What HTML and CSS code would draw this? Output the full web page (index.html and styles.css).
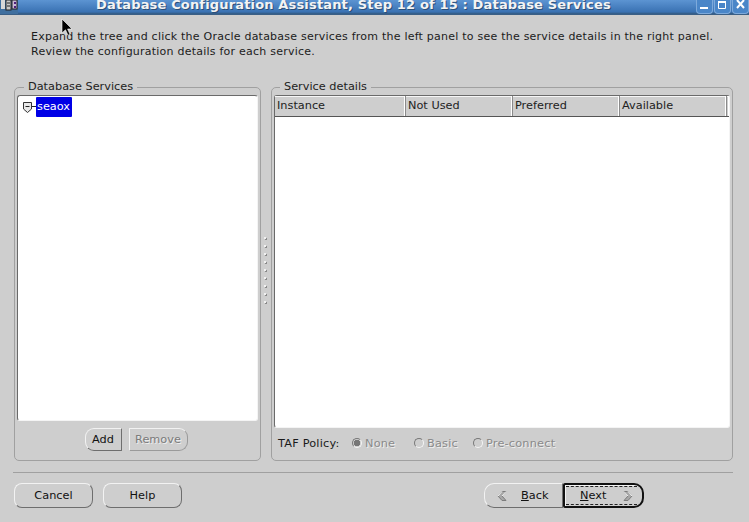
FILE: index.html
```html
<!DOCTYPE html>
<html lang="en">
<head>
<meta charset="utf-8">
<title>Database Configuration Assistant</title>
<link rel="stylesheet" href="styles.css">
</head>
<body>
<div class="window">
  <header class="titlebar">
    <svg class="app-icon" width="18" height="14" viewBox="0 0 18 14">
      <rect x="0" y="0" width="18" height="14" fill="#3f6f9f"/>
      <rect x="1" y="0" width="4" height="9" fill="#d8d8d8"/>
      <rect x="6" y="0" width="5" height="10" fill="#c9c9c9" stroke="#222" stroke-width="1"/>
      <path d="M7 3h3M7 6h3" stroke="#222" fill="none"/>
      <rect x="12" y="0" width="5" height="9" fill="#c8b8d8" stroke="#222" stroke-width="1"/>
      <rect x="14" y="2" width="2" height="2" fill="#50207a"/>
      <rect x="14" y="6" width="2" height="2" fill="#50207a"/>
    </svg>
    <h1 class="title">Database Configuration Assistant, Step 12 of 15 : Database Services</h1>
    <div class="wm-buttons">
      <span class="wm-btn"><svg width="15" height="14" viewBox="0 0 15 14"><rect x="3" y="7" width="8" height="2" fill="#fff"/></svg></span>
      <span class="wm-btn"><svg width="15" height="14" viewBox="0 0 15 14"><path d="M3.5 1.5h7v7h-7z" fill="none" stroke="#fff"/><path d="M3 1h8v2H3z" fill="#fff"/></svg></span>
      <span class="wm-btn"><svg width="15" height="14" viewBox="0 0 15 14"><path d="M4 0l7 8M11 0l-7 8" stroke="#fff" stroke-width="2" fill="none"/></svg></span>
    </div>
  </header>

  <p class="intro">Expand the tree and click the Oracle database services from the left panel to see the service details in the right panel.<br>Review the configuration details for each service.</p>

  <main class="panels">
    <fieldset class="group group-left">
      <legend class="legend">Database Services</legend>
      <div class="tree">
        <div class="tree-row">
          <svg class="tree-toggle" width="14" height="13" viewBox="0 0 14 13">
            <path d="M1.5 1.5h8v6.5l-4 3.5-4-3.5z" fill="#e8e8e8" stroke="#333"/>
            <path d="M3.5 5.5h4M10 5.5h4" stroke="#222" fill="none"/>
          </svg>
          <span class="tree-label">seaox</span>
        </div>
      </div>
      <div class="list-actions">
        <button class="btn btn-small btn-add" type="button">Add</button>
        <button class="btn btn-small btn-remove" type="button" disabled>Remove</button>
      </div>
    </fieldset>

    <div class="splitter">
      <i></i><i></i><i></i><i></i><i></i><i></i><i></i><i></i><i></i>
    </div>

    <fieldset class="group group-right">
      <legend class="legend legend-right">Service details</legend>
      <div class="table">
        <div class="thead">
          <div class="th th-instance">Instance</div>
          <div class="th th-notused">Not Used</div>
          <div class="th th-preferred">Preferred</div>
          <div class="th th-available">Available</div>
          <div class="th th-filler"></div>
        </div>
      </div>
      <div class="taf">
        <span class="taf-label">TAF Policy:</span>
        <label class="radio radio-none"><span class="dot dot-on"></span>None</label>
        <label class="radio radio-basic"><span class="dot"></span>Basic</label>
        <label class="radio"><span class="dot"></span>Pre-connect</label>
      </div>
    </fieldset>
  </main>

  <hr class="rule">

  <footer class="footer">
    <div class="footer-left">
      <button class="btn btn-wide" type="button">Cancel</button>
      <button class="btn btn-wide" type="button">Help</button>
    </div>
    <div class="nav-group">
      <button class="btn btn-back" type="button">
        <svg width="12" height="12" viewBox="0 0 12 12"><path d="M6 1.5L2 6l4 4.5h4L6 6l4-4.5z" fill="#a8a8a8" stroke="#7c7c7c"/><path d="M6 1.5L2 6M10 1.5L6 6" fill="none" stroke="#f4f4f4"/></svg>
        <span class="btn-text"><u>B</u>ack</span>
      </button>
      <button class="btn btn-next" type="button">
        <span class="focus-ring"><span class="btn-text"><u>N</u>ext</span>
        <svg width="12" height="12" viewBox="0 0 12 12"><path d="M6 1.5L10 6l-4 4.5H2L6 6 2 1.5z" fill="#a8a8a8" stroke="#7c7c7c"/><path d="M2 1.5L6 6M6 1.5L10 6" fill="none" stroke="#f4f4f4"/></svg></span>
      </button>
    </div>
  </footer>
</div>

<svg class="cursor" width="13" height="18" viewBox="0 0 13 18">
  <path d="M1 0v14l3.5-3.2 2.5 5.5 2-1-2.4-5.3H11z" fill="#000" stroke="#fff" stroke-width=".6"/>
</svg>
</body>
</html>
```

FILE: styles.css
```css
* { box-sizing: border-box; }
html, body { margin: 0; padding: 0; }
body {
  width: 749px;
  height: 522px;
  overflow: hidden;
  background: #cecece;
  font-family: "DejaVu Sans", sans-serif;
  font-size: 11.3px;
  color: #1a1a1a;
  position: relative;
}
.window { display: flex; flex-direction: column; height: 522px; }

.titlebar {
  height: 15px;
  flex: none;
  display: flex;
  align-items: flex-start;
  background: linear-gradient(#5c94d2, #3a72b3 85%, #33597f);
  border-bottom: 1px solid #3a5f86;
  overflow: hidden;
}
.app-icon { flex: none; }
.title {
  margin: -3px 0 0 78px;
  font-size: 13px;
  font-weight: bold;
  line-height: 16px;
  letter-spacing: .16px;
  color: #f4f4f4;
  text-shadow: 1px 1px 0 #2c4f78;
  white-space: nowrap;
  flex: none;
}
.wm-buttons { margin-left: auto; display: flex; gap: 1px; }
.wm-btn {
  width: 17px;
  height: 14px;
  display: flex;
  justify-content: center;
  background: #4a86c8;
  border: 1px solid #7eaadb;
  border-top: 0;
  border-radius: 0 0 4px 4px;
}
.wm-btn svg { flex: none; }

.intro {
  margin: 14px 0 0 31px;
  font-size: 11px;
  line-height: 15px;
  height: 31px;
  white-space: nowrap;
  color: #1c1c1c;
  letter-spacing: .23px;
}

.panels {
  flex: none;
  display: flex;
  margin: 20px 0 0 14px;
  height: 381px;
  width: 719px;
}
.group {
  margin: 0;
  padding: 0;
  min-width: 0;
  height: 381px;
  border: 1px solid #a0a0a0;
  border-radius: 5px;
  display: flex;
  flex-direction: column;
}
.group-left { width: 247px; padding: 0 2px; }
.group-right { width: 462px; padding: 0 2px; }
.legend {
  margin-left: 7px;
  padding: 0 4px;
  line-height: 14px;
  color: #222;
}
.legend-right { margin-left: 6px; }
.tree {
  height: 326px;
  background: #fff;
  border: 1px solid;
  border-color: #6a6a6a #f4f4f4 #f4f4f4 #6a6a6a;
  border-radius: 3px;
  padding: 1px 0 0 4px;
  margin-top: 1px;
}
.tree-row { display: flex; align-items: center; }
.tree-toggle { flex: none; }
.tree-label {
  background: #0000e6;
  color: #fff;
  padding: 0 2px 0 1px;
  height: 20px;
  line-height: 20px;
  border-radius: 1px;
}
.list-actions {
  display: flex;
  justify-content: center;
  gap: 7px;
  margin: 7px 0 0 -3px;
}

.btn {
  font: inherit;
  color: #111;
  background: #cecece;
  height: 25px;
  padding: 0;
  border: 1px solid;
  border-color: #f2f2f2 #6e6e6e #6e6e6e #f2f2f2;
  border-radius: 8px;
}
.btn-small { height: 23px; }
.btn-add { width: 37px; border-radius: 9px 1px 1px 9px; }
.btn-remove { width: 59px; color: #7b7b7b; text-shadow: 1px 1px 0 #efefef; border-radius: 1px 9px 9px 1px; border-right-color: #9a9a9a; border-bottom-color: #9a9a9a; }
.btn-wide { width: 79px; }

.splitter {
  width: 10px;
  flex: none;
  display: flex;
  flex-direction: column;
  align-items: center;
  gap: 6px;
  padding-top: 157px;
  padding-right: 3px;
}
.splitter i {
  width: 2px;
  height: 2px;
  background: #f0f0f0;
  box-shadow: 1px 1px 0 #8a8a8a;
}

.table {
  height: 333px;
  background: #fff;
  border: 1px solid;
  border-color: #6a6a6a #f4f4f4 #f4f4f4 #6a6a6a;
  border-radius: 3px;
  margin-top: 1px;
}
.thead {
  display: flex;
  height: 21px;
  background: #cecece;
  border-bottom: 1px solid #555;
}
.th {
  padding-left: 2px;
  line-height: 20px;
  border-right: 1px solid #8a8a8a;
  box-shadow: inset -1px 0 0 #fff, inset 0 1px 0 #f6f6f6;
  color: #222;
}
.th-instance { width: 131px; }
.th-notused { width: 107px; }
.th-preferred { width: 107px; }
.th-available { width: 107px; }
.th-filler { flex: 1; border-right: 0; }

.taf {
  display: flex;
  align-items: center;
  height: 16px;
  margin: 7px 0 0 4px;
  white-space: nowrap;
  letter-spacing: .2px;
}
.taf-label { width: 74px; }
.radio { display: flex; align-items: center; color: #8a8a8a; text-shadow: 1px 1px 0 #efefef; }
.radio-none { width: 62px; }
.radio-basic { width: 59px; }
.dot {
  flex: none;
  width: 10px;
  height: 10px;
  margin-right: 3px;
  border-radius: 50%;
  border: 1px solid;
  border-color: #777 #f4f4f4 #f4f4f4 #777;
}
.dot-on { background: radial-gradient(circle, #777 0 3px, #cecece 3.5px); }

.rule {
  margin: 11px 0 0 13px;
  width: 720px;
  height: 1px;
  border: 0;
  background: #a0a0a0;
}

.footer {
  display: flex;
  justify-content: space-between;
  margin: 10px 105px 0 14px;
}
.footer-left { display: flex; gap: 10px; }
.nav-group { display: flex; }
.btn-back {
  width: 79px;
  border-radius: 10px 0 0 10px;
  display: flex;
  align-items: center;
  padding-left: 11px;
}
.btn-back .btn-text { margin-left: 13px; }
.btn-next {
  width: 81px;
  border: 2px solid #111;
  border-radius: 2px 10px 10px 2px;
  padding: 1px;
  box-shadow: inset 1px 1px 0 #f2f2f2;
}
.focus-ring {
  display: flex;
  align-items: center;
  justify-content: space-between;
  height: 100%;
  margin-right: 4px;
  padding: 0 3px 0 14px;
  border-top: 1px dashed #222;
  border-bottom: 1px dashed #222;
}
.cursor { position: absolute; left: 61px; top: 19px; }
```
